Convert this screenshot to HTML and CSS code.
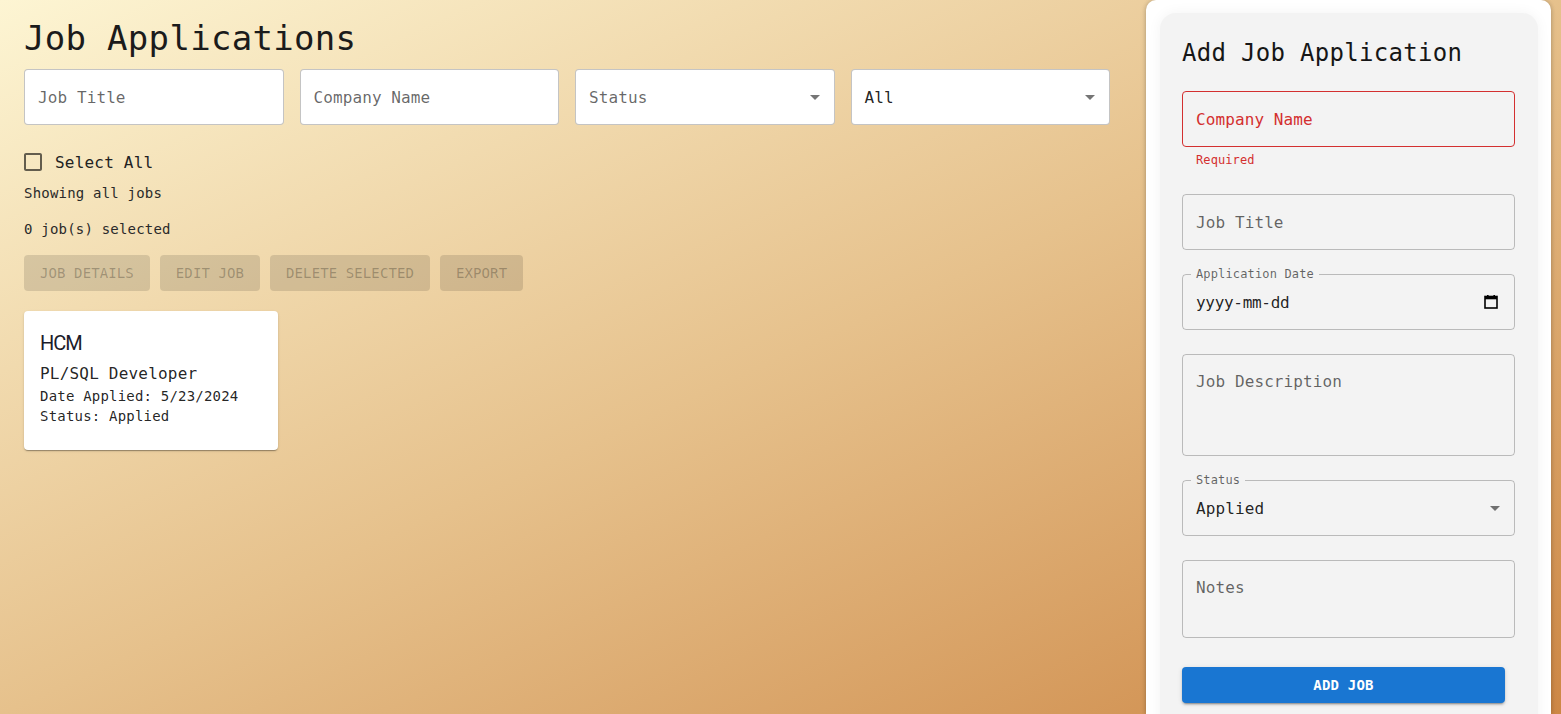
FILE: index.html
```html
<!DOCTYPE html>
<html lang="en">
<head>
<meta charset="utf-8">
<title>Job Applications</title>
<link rel="stylesheet" href="styles.css">
</head>
<body>
<div class="page">
  <main class="main">
    <h1 class="title">Job Applications</h1>
    <div class="filters">
      <div class="field white"><input class="inp" type="text" placeholder="Job Title"></div>
      <div class="field white"><input class="inp" type="text" placeholder="Company Name"></div>
      <div class="field white select"><span class="ph">Status</span>
        <svg class="arrow" viewBox="0 0 24 24"><path d="M7 10l5 5 5-5z"/></svg></div>
      <div class="field white select"><span class="val">All</span>
        <svg class="arrow" viewBox="0 0 24 24"><path d="M7 10l5 5 5-5z"/></svg></div>
    </div>

    <label class="check-row">
      <svg class="checkbox" viewBox="0 0 24 24"><path d="M19 5v14H5V5h14m0-2H5c-1.1 0-2 .9-2 2v14c0 1.1.9 2 2 2h14c1.1 0 2-.9 2-2V5c0-1.1-.9-2-2-2z"/></svg>
      <span>Select All</span>
    </label>
    <p class="info first">Showing all jobs</p>
    <p class="info second">0 job(s) selected</p>

    <div class="actions">
      <button class="btn-disabled" disabled>Job Details</button>
      <button class="btn-disabled" disabled>Edit Job</button>
      <button class="btn-disabled" disabled>Delete Selected</button>
      <button class="btn-disabled" disabled>Export</button>
    </div>

    <div class="cards">
      <div class="card">
        <div class="card-company">HCM</div>
        <div class="card-title">PL/SQL Developer</div>
        <div class="card-line">Date Applied: 5/23/2024</div>
        <div class="card-line">Status: Applied</div>
      </div>
    </div>
  </main>

  <aside class="side">
    <div class="side-inner">
      <h2 class="side-title">Add Job Application</h2>

      <div class="field error"><input class="inp" type="text" placeholder="Company Name"></div>
      <div class="helper">Required</div>

      <div class="field gap"><input class="inp" type="text" placeholder="Job Title"></div>

      <div class="field gap">
        <span class="notch">Application Date</span>
        <span class="val date">yyyy-mm-dd</span>
        <svg class="cal" viewBox="0 0 14 14"><rect x="1" y="1.5" width="12" height="11.5" fill="none" stroke="#000" stroke-width="1.6"/><rect x="1" y="1.5" width="12" height="2.8" fill="#000"/><rect x="3" y="0" width="1.6" height="2.5" fill="#000"/><rect x="9.4" y="0" width="1.6" height="2.5" fill="#000"/></svg>
      </div>

      <div class="field gap multi desc"><textarea class="ta" placeholder="Job Description"></textarea></div>

      <div class="field gap select">
        <span class="notch">Status</span>
        <span class="val">Applied</span>
        <svg class="arrow" viewBox="0 0 24 24"><path d="M7 10l5 5 5-5z"/></svg>
      </div>

      <div class="field gap multi notes"><textarea class="ta" placeholder="Notes"></textarea></div>

      <button class="btn-primary">Add Job</button>
    </div>
  </aside>
</div>
</body>
</html>
```

FILE: styles.css
```css
* { box-sizing: border-box; }

html, body {
  margin: 0;
  height: 100%;
  overflow: hidden;
}

body {
  font-family: "DejaVu Sans Mono", "Liberation Mono", monospace;
  color: rgba(0, 0, 0, 0.87);
  background: linear-gradient(to bottom right, #fdf5d3 0%, #e6c18c 50%, #cd8745 100%);
}

.page {
  display: flex;
  height: 100%;
}

.main {
  flex: 1;
  padding: 17px 36px 0 24px;
}

.title {
  margin: 0;
  font-size: 34px;
  line-height: 42px;
  font-weight: 400;
  letter-spacing: 0.3px;
  color: #1b1b1b;
}

.filters {
  margin-top: 10px;
  display: grid;
  grid-template-columns: repeat(4, 1fr);
  gap: 16px;
}

/* Outlined field */
.field {
  position: relative;
  height: 56px;
  border: 1px solid rgba(0, 0, 0, 0.23);
  border-radius: 4px;
  display: flex;
  align-items: center;
  padding: 0 13px;
  font-size: 16px;
}

.field.white { background: #fff; }

.inp, .ta {
  width: 100%;
  border: none;
  outline: none;
  background: transparent;
  font: inherit;
  font-size: 16px;
  color: rgba(0, 0, 0, 0.87);
  padding: 0;
  letter-spacing: 0.1px;
}

.inp::placeholder, .ta::placeholder {
  color: rgba(0, 0, 0, 0.6);
  opacity: 1;
}

.ta {
  resize: none;
  height: 100%;
  line-height: 24px;
  overflow: hidden;
}

.ph {
  flex: 1;
  color: rgba(0, 0, 0, 0.6);
  letter-spacing: 0.1px;
}

.val {
  flex: 1;
  color: rgba(0, 0, 0, 0.87);
  letter-spacing: 0.1px;
}

.arrow {
  width: 24px;
  height: 24px;
  fill: rgba(0, 0, 0, 0.54);
  margin-right: -6px;
}

.check-row {
  margin-top: 25px;
  height: 24px;
  display: flex;
  align-items: center;
  gap: 10px;
  font-size: 16px;
  letter-spacing: 0.2px;
  color: #222;
}

.checkbox {
  width: 24px;
  height: 24px;
  margin-left: -3px;
  fill: rgba(0, 0, 0, 0.6);
}

.info {
  margin: 0;
  font-size: 14px;
  line-height: 20px;
  letter-spacing: 0.2px;
  color: #2a2a2a;
}

.info.first { margin-top: 9px; }
.info.second { margin-top: 16px; }

.actions {
  margin-top: 16px;
  display: flex;
  gap: 10px;
}

.btn-disabled {
  height: 36px;
  padding: 0 16px;
  border: none;
  border-radius: 4px;
  background: rgba(0, 0, 0, 0.12);
  color: rgba(0, 0, 0, 0.26);
  font-family: inherit;
  font-size: 14px;
  font-weight: 500;
  letter-spacing: 0.1px;
  text-transform: uppercase;
}

.cards {
  margin-top: 20px;
  display: flex;
}

.card {
  width: 254px;
  background: #fff;
  border-radius: 4px;
  padding: 16px 16px 24px;
  box-shadow: 0 2px 1px -1px rgba(0, 0, 0, 0.2), 0 1px 1px 0 rgba(0, 0, 0, 0.14), 0 1px 3px 0 rgba(0, 0, 0, 0.12);
}

.card-company {
  font-family: Roboto, "Liberation Sans", sans-serif;
  font-size: 20px;
  line-height: 32px;
  letter-spacing: -1px;
  color: #1c1c2a;
}

.card-title {
  margin-top: 3px;
  font-size: 16px;
  line-height: 24px;
  letter-spacing: 0.2px;
}

.card-line {
  font-size: 14px;
  line-height: 20px;
  letter-spacing: 0.2px;
}

/* Right panel */
.side {
  width: 405px;
  margin-right: 10px;
  background: #fff;
  border-radius: 10px 10px 0 0;
  box-shadow: 0 0 4px rgba(0, 0, 0, 0.2), 0 2px 6px rgba(0, 0, 0, 0.1);
  padding: 13px 13px 0 14px;
}

.side-inner {
  background: #f3f3f3;
  border-radius: 16px;
  box-shadow: 0 0 14px rgba(0, 0, 0, 0.05);
  padding: 24px 23px 40px 22px;
  min-height: 760px;
}

.side-title {
  margin: 0 0 22px;
  font-size: 24px;
  line-height: 32px;
  font-weight: 400;
  letter-spacing: 0.3px;
  color: #161616;
}

.field.error {
  border-color: #d32f2f;
}

.field.error .inp::placeholder {
  color: #d32f2f;
}

.helper {
  margin: 3px 14px 0;
  font-size: 12px;
  line-height: 20px;
  letter-spacing: 0.1px;
  color: #d32f2f;
}

.field.gap { margin-top: 24px; }

.notch {
  position: absolute;
  top: -10px;
  left: 8px;
  padding: 0 5px;
  background: #f3f3f3;
  font-size: 12px;
  line-height: 18px;
  letter-spacing: 0.15px;
  color: rgba(0, 0, 0, 0.6);
}

.date {
  letter-spacing: -0.3px;
}

.cal {
  width: 14px;
  height: 14px;
  margin-right: 3px;
}

.field.multi {
  align-items: flex-start;
  padding-top: 15px;
  padding-bottom: 8px;
}

.field.desc { height: 102px; }
.field.notes { height: 78px; }

.btn-primary {
  margin-top: 29px;
  display: block;
  width: 323px;
  height: 36px;
  border: none;
  border-radius: 4px;
  background: #1976d2;
  color: #fff;
  font-family: inherit;
  font-size: 14px;
  font-weight: 700;
  letter-spacing: 0.2px;
  text-transform: uppercase;
  box-shadow: 0 3px 1px -2px rgba(0, 0, 0, 0.2), 0 2px 2px 0 rgba(0, 0, 0, 0.14), 0 1px 5px 0 rgba(0, 0, 0, 0.12);
}
```
